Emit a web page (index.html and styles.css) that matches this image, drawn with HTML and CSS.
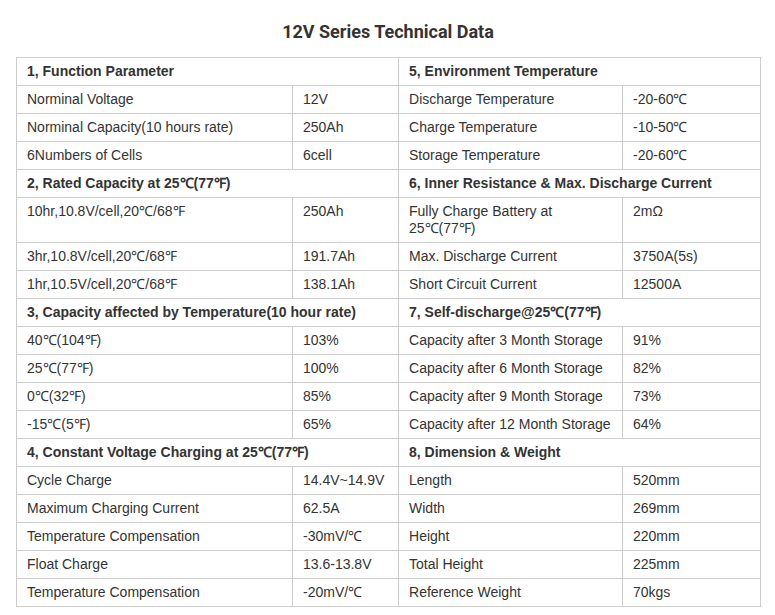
FILE: index.html
```html
<!DOCTYPE html>
<html>
<head>
<meta charset="utf-8">
<link rel="stylesheet" href="styles.css">
</head>
<body>
<div class="page">
  <h2 class="title">12V Series Technical Data</h2>
  <table class="spec">
    <colgroup>
      <col class="c1"><col class="c2"><col class="c3"><col class="c4">
    </colgroup>
    <tbody>
      <tr class="head"><td colspan="2">1, Function Parameter</td><td colspan="2">5, Environment Temperature</td></tr>
      <tr><td>Norminal Voltage</td><td>12V</td><td>Discharge Temperature</td><td>-20-60℃</td></tr>
      <tr><td>Norminal Capacity(10 hours rate)</td><td>250Ah</td><td>Charge Temperature</td><td>-10-50℃</td></tr>
      <tr><td>6Numbers of Cells</td><td>6cell</td><td>Storage Temperature</td><td>-20-60℃</td></tr>
      <tr class="head"><td colspan="2">2, Rated Capacity at 25℃(77℉)</td><td colspan="2">6, Inner Resistance &amp; Max. Discharge Current</td></tr>
      <tr><td>10hr,10.8V/cell,20℃/68℉</td><td>250Ah</td><td>Fully Charge Battery at 25℃(77℉)</td><td>2mΩ</td></tr>
      <tr><td>3hr,10.8V/cell,20℃/68℉</td><td>191.7Ah</td><td>Max. Discharge Current</td><td>3750A(5s)</td></tr>
      <tr><td>1hr,10.5V/cell,20℃/68℉</td><td>138.1Ah</td><td>Short Circuit Current</td><td>12500A</td></tr>
      <tr class="head"><td colspan="2">3, Capacity affected by Temperature(10 hour rate)</td><td colspan="2">7, Self-discharge@25℃(77℉)</td></tr>
      <tr><td>40℃(104℉)</td><td>103%</td><td>Capacity after 3 Month Storage</td><td>91%</td></tr>
      <tr><td>25℃(77℉)</td><td>100%</td><td>Capacity after 6 Month Storage</td><td>82%</td></tr>
      <tr><td>0℃(32℉)</td><td>85%</td><td>Capacity after 9 Month Storage</td><td>73%</td></tr>
      <tr><td>-15℃(5℉)</td><td>65%</td><td>Capacity after 12 Month Storage</td><td>64%</td></tr>
      <tr class="head"><td colspan="2">4, Constant Voltage Charging at 25℃(77℉)</td><td colspan="2">8, Dimension &amp; Weight</td></tr>
      <tr><td>Cycle Charge</td><td>14.4V~14.9V</td><td>Length</td><td>520mm</td></tr>
      <tr><td>Maximum Charging Current</td><td>62.5A</td><td>Width</td><td>269mm</td></tr>
      <tr><td>Temperature Compensation</td><td>-30mV/℃</td><td>Height</td><td>220mm</td></tr>
      <tr><td>Float Charge</td><td>13.6-13.8V</td><td>Total Height</td><td>225mm</td></tr>
      <tr><td>Temperature Compensation</td><td>-20mV/℃</td><td>Reference Weight</td><td>70kgs</td></tr>
    </tbody>
  </table>
</div>
</body>
</html>
```

FILE: styles.css
```css
html, body {
  margin: 0;
  padding: 0;
  background: #fff;
}

.page {
  padding: 0 15px 0 16px;
  font-family: "Liberation Sans", Arial, sans-serif;
  color: #333;
}

.title {
  margin: 0;
  padding-top: 20px;
  height: 37px;
  font-family: Roboto, "Liberation Sans", sans-serif;
  font-weight: 700;
  font-size: 18px;
  line-height: 24px;
  text-align: center;
  color: #333;
}

.spec {
  width: 744px;
  border-collapse: collapse;
  table-layout: fixed;
  font-size: 14px;
  line-height: 17px;
}

.c1 { width: 276px; }
.c2 { width: 106px; }
.c3 { width: 224px; }
.c4 { width: 138px; }

.spec td {
  border: 1px solid #ccc;
  padding: 5px 10px;
  vertical-align: top;
  text-align: left;
}

.spec .head td {
  font-weight: 700;
}
```
